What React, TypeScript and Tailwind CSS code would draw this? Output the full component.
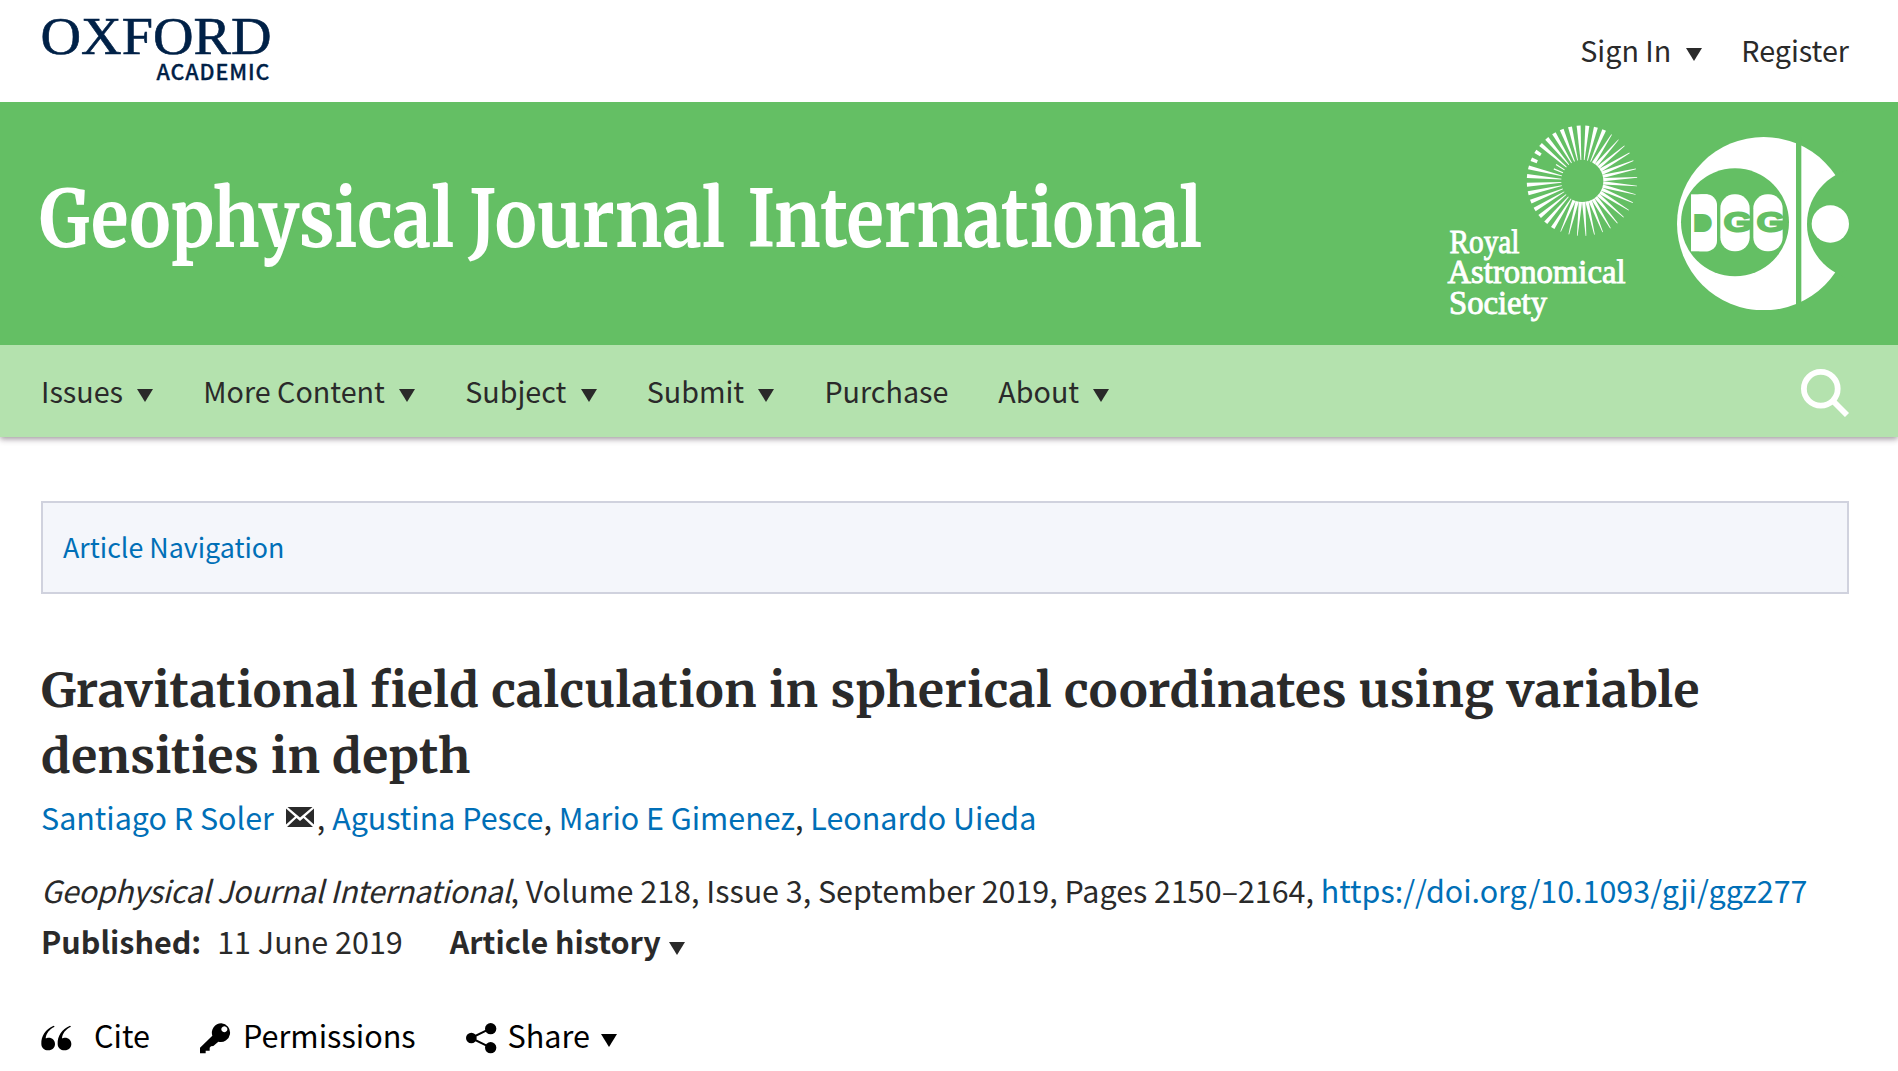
import React from 'react';

function Caret({ className = '' }: { className?: string }) {
  return (
    <svg viewBox="0 0 16 13" className={`h-[13px] w-[16px] shrink-0 ${className}`} fill="currentColor">
      <path d="M0 0H16L8 13Z" />
    </svg>
  );
}

function OxfordLogo() {
  return (
    <svg width="232" height="84" viewBox="0 0 232 84" fill="#002147" stroke="#002147" className="overflow-visible">
      <text
        x="-0.5"
        y="54.3"
        fontSize="52"
        strokeWidth="0.6"
        textLength="231"
        lengthAdjust="spacingAndGlyphs"
        className="font-['Liberation_Serif',serif]"
      >
        OXFORD
      </text>
      <text
        x="115.5"
        y="80"
        fontSize="21.5"
        fontWeight="500"
        strokeWidth="0.3"
        textLength="113"
        className="font-['Noto_Sans_CJK_SC',sans-serif]"
      >
        ACADEMIC
      </text>
    </svg>
  );
}

const RAYS = Array.from({ length: 40 }, (_, i) => 5.2 + i * 9);

function ray(angle: number) {
  if (angle > 290 && angle < 304) {
    return 'M-1.9 -55.5H1.9L1.6 -49H-1.6ZM-0.7 -31H0.7L0.5 -21H-0.5Z';
  }
  if (angle > 28 && angle < 206) return 'M-0.35 -55H0.35L1.7 -21H-1.7Z';
  return 'M-2 -55.5H2L0.4 -21H-0.4Z';
}

function RasLogo() {
  return (
    <svg width="192" height="199" viewBox="0 0 192 199" fill="white" className="overflow-visible">
      <g transform="translate(134.3 57)">
        {RAYS.map((a) => (
          <path key={a} d={ray(a)} transform={`rotate(${a})`} />
        ))}
      </g>
      <g fontSize="33" stroke="white" strokeWidth="0.9" className="font-['Liberation_Serif',serif]">
        <text x="1.5" y="129" textLength="70" lengthAdjust="spacingAndGlyphs">Royal</text>
        <text x="-0.5" y="159" textLength="178" lengthAdjust="spacingAndGlyphs">Astronomical</text>
        <text x="1" y="189.5" textLength="98" lengthAdjust="spacingAndGlyphs">Society</text>
      </g>
    </svg>
  );
}

function DggLogo() {
  return (
    <svg width="172" height="173.3" viewBox="741 80 516 520" fill="white">
      <circle cx="1001" cy="340" r="260" />
      <g fill="#64bf64">
        <rect x="1098" y="70" width="16" height="540" />
        <circle cx="915" cy="336" r="162" />
        <circle cx="1299" cy="341" r="168" />
      </g>
      <circle cx="1201" cy="341" r="56" />
      <rect x="783" y="252" width="50" height="171" />
      <rect x="783" y="252" width="78" height="171" rx="32" />
      <rect x="871" y="252" width="88" height="171" rx="42" />
      <rect x="970" y="252" width="88" height="171" rx="42" />
      <g fill="#64bf64" stroke="#64bf64" className="font-['Liberation_Sans',sans-serif]">
        <text x="802" y="354" fontSize="46" fontWeight="700" strokeWidth="24">D</text>
        <text x="883" y="363" fontSize="76" strokeWidth="9" textLength="82" lengthAdjust="spacingAndGlyphs">G</text>
        <text x="982" y="363" fontSize="76" strokeWidth="9" textLength="82" lengthAdjust="spacingAndGlyphs">G</text>
      </g>
    </svg>
  );
}

function JournalTitle() {
  return (
    <svg
      width="1166"
      height="120"
      viewBox="0 0 1166 120"
      fill="white"
      fontSize="78.5"
      fontWeight="700"
      className="mr-auto overflow-visible font-['Merriweather','Noto_Serif',serif]"
    >
      <text x="0" y="82.5" textLength="415" lengthAdjust="spacingAndGlyphs">Geophysical</text>
      <text x="430" y="82.5" textLength="256" lengthAdjust="spacingAndGlyphs">Journal</text>
      <text x="708.5" y="82.5" textLength="454.5" lengthAdjust="spacingAndGlyphs">International</text>
    </svg>
  );
}

function QuoteIcon() {
  const d =
    'M160 46C135 56 122 78 123 100C123 112 131 120 144 120C156 120 164 112 164 101C164 90 156 82 145 82C141 82 139 83 136 84C137 70 146 57 163 49Z';
  return (
    <svg width="31" height="31" viewBox="122 38 93 93">
      <path d={d} />
      <path d={d} transform="translate(49 0)" />
    </svg>
  );
}

function KeyIcon() {
  return (
    <svg width="31" height="31" viewBox="600 38 93 93">
      <path
        fillRule="evenodd"
        d="M664 39a28 28 0 1 1 -9 55L640 107L633 108L629 112V121H617V129H600V112L637 76A28 28 0 0 1 664 39ZM673 48a9 9 0 1 0 .1 0Z"
      />
    </svg>
  );
}

function ShareIcon() {
  return (
    <svg width="31" height="31" viewBox="1397 38 93 93">
      <path d="M1471 54L1412 83L1471 112" fill="none" stroke="black" strokeWidth="6" />
      <circle cx="1413" cy="83" r="16" />
      <circle cx="1471" cy="55" r="17" />
      <circle cx="1471" cy="112" r="17" />
    </svg>
  );
}

const NAV: [string, boolean][] = [
  ['Issues', true],
  ['More Content', true],
  ['Subject', true],
  ['Submit', true],
  ['Purchase', false],
  ['About', true],
];

const AUTHORS = ['Agustina Pesce', 'Mario E Gimenez', 'Leonardo Uieda'];

export default function App() {
  return (
    <div className="h-[1071px] w-[1898px] overflow-hidden bg-white font-['Noto_Sans_CJK_SC','Noto_Sans',sans-serif] text-[#2a2a2a]">
      <header className="flex h-[102px] items-start justify-between pr-[49px] pl-[41px]">
        <OxfordLogo />
        <div className="flex h-[100px] items-center text-[28.7px]">
          <a>Sign In</a>
          <Caret className="mt-[9px] ml-[15px]" />
          <a className="ml-[39px]">Register</a>
        </div>
      </header>

      <div className="relative z-10 flex h-[243px] items-center bg-[#64bf64] pr-[49px] pl-[39px]">
        <JournalTitle />
        <RasLogo />
        <div className="ml-[37px]">
          <DggLogo />
        </div>
      </div>

      <nav className="flex h-[92px] items-center bg-[#b4e2ae] pr-[49px] pl-[41px] text-[28.7px] shadow-[0_2px_6px_rgba(40,20,35,0.45)]">
        <ul className="mr-auto flex gap-[50px]">
          {NAV.map(([label, menu]) => (
            <li key={label} className="flex items-center">
              {label}
              {menu && <Caret className="mt-[9px] ml-[14.3px]" />}
            </li>
          ))}
        </ul>
        <svg width="48" height="48" viewBox="0 0 48 48" fill="none" stroke="white" strokeWidth="5.8" className="mt-[3px]">
          <circle cx="19.8" cy="19.8" r="16.9" />
          <path d="M31.5 31.5L46 46" />
        </svg>
      </nav>

      <main className="pr-[49px] pl-[41px]">
        <div className="mt-[64px] flex h-[93px] items-center border-2 border-[#d0d2de] bg-[#f4f6fb] pb-px pl-[20px] text-[26.8px] text-[#006fb7]">
          Article Navigation
        </div>

        <h1 className="mt-[63px] text-[48px] leading-[66px] font-bold tracking-[0.46px] font-['Merriweather','Noto_Serif',serif]">
          Gravitational field calculation in spherical coordinates using variable
          <br />
          <span className="tracking-[0.35px]">densities in depth</span>
        </h1>

        <div className="mt-[3px] flex h-[50px] items-center text-[30.45px] leading-[50px] whitespace-pre">
          <a className="text-[#006fb7]">Santiago R Soler</a>
          <svg width="28" height="20" viewBox="0 0 28 20" fill="#2a2a2a" className="ml-[12px]">
            <path d="M1.5 0H26.5L14 10.5ZM0 1.5L9 9.5L0 17.5ZM28 1.5L19 9.5L28 17.5ZM1 20L10.5 11L14 14L17.5 11L27 20Z" />
          </svg>
          <span className="ml-[3px]">, </span>
          {AUTHORS.map((name, i) => (
            <React.Fragment key={name}>
              {i > 0 && <span>, </span>}
              <a className="text-[#006fb7]">{name}</a>
            </React.Fragment>
          ))}
        </div>

        <div className="mt-[23px] h-[51px] text-[30.45px] leading-[51px] whitespace-nowrap">
          <em className="tracking-[-0.35px]">Geophysical Journal International</em>, Volume 218, Issue 3, September 2019, Pages
          2150–2164, <a className="text-[#006fb7]">https://doi.org/10.1093/gji/ggz277</a>
        </div>
        <div className="flex h-[51px] items-center text-[30.5px] leading-[51px]">
          <b>Published:</b>
          <span className="ml-[16px]">11 June 2019</span>
          <b className="ml-[47px]">Article history</b>
          <Caret className="mt-[13px] ml-[8px]" />
        </div>

        <div className="mt-[43px] flex h-[51px] items-center text-[30.6px] leading-[51px] text-black">
          <div className="flex w-[159px] items-center gap-[22px]">
            <span className="pt-[5px]"><QuoteIcon /></span>
            Cite
          </div>
          <div className="flex w-[265.5px] items-center gap-[12px]">
            <span className="pt-[5px]"><KeyIcon /></span>
            Permissions
          </div>
          <div className="flex items-center gap-[11px]">
            <span className="pt-[5px]"><ShareIcon /></span>
            Share
            <Caret className="mt-[9px]" />
          </div>
        </div>
      </main>
    </div>
  );
}
